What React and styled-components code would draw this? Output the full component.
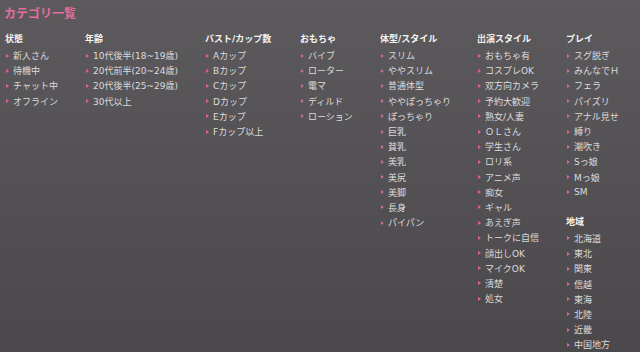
import styled, { createGlobalStyle } from 'styled-components';

const GlobalStyle = createGlobalStyle`
   html, body {
      margin: 0;
      padding: 0;
   }
   body {
      font-family: "DejaVu Sans", "Noto Sans CJK JP", sans-serif;
      background: #4b484c;
   }
`;

const categories = [
   {
      width: 80,
      groups: [
         { title: '状態', items: ['新人さん', '待機中', 'チャット中', 'オフライン'] },
      ],
   },
   {
      width: 120,
      groups: [
         {
            title: '年齢',
            items: ['10代後半(18~19歳)', '20代前半(20~24歳)', '20代後半(25~29歳)', '30代以上'],
         },
      ],
   },
   {
      width: 95,
      groups: [
         {
            title: 'バスト/カップ数',
            items: ['Aカップ', 'Bカップ', 'Cカップ', 'Dカップ', 'Eカップ', 'Fカップ以上'],
         },
      ],
   },
   {
      width: 80,
      groups: [
         { title: 'おもちゃ', items: ['バイブ', 'ローター', '電マ', 'ディルド', 'ローション'] },
      ],
   },
   {
      width: 97,
      groups: [
         {
            title: '体型/スタイル',
            items: [
               'スリム', 'ややスリム', '普通体型', 'ややぽっちゃり', 'ぽっちゃり', '巨乳',
               '貧乳', '美乳', '美尻', '美脚', '長身', 'パイパン',
            ],
         },
      ],
   },
   {
      width: 89,
      groups: [
         {
            title: '出演スタイル',
            items: [
               'おもちゃ有', 'コスプレOK', '双方向カメラ', '予約大歓迎', '熟女/人妻', 'ＯＬさん',
               '学生さん', 'ロリ系', 'アニメ声', '痴女', 'ギャル', 'あえぎ声', 'トークに自信',
               '顔出しOK', 'マイクOK', '清楚', '処女',
            ],
         },
      ],
   },
   {
      width: 70,
      groups: [
         {
            title: 'プレイ',
            items: [
               'スグ脱ぎ', 'みんなでＨ', 'フェラ', 'パイズリ', 'アナル見せ', '縛り', '潮吹き',
               'Sっ娘', 'Mっ娘', 'SM',
            ],
         },
         {
            title: '地域',
            items: ['北海道', '東北', '関東', '信越', '東海', '北陸', '近畿', '中国地方'],
         },
      ],
   },
];

const App = () => {
   return (
      <>
         <GlobalStyle />
         <Page>
            <Title>カテゴリ一覧</Title>
            <Columns>
               {categories.map((col, i) => (
                  <Column key={i} $width={col.width}>
                     {col.groups.map((group) => (
                        <Group key={group.title}>
                           <Heading>{group.title}</Heading>
                           <List>
                              {group.items.map((item) => (
                                 <Item key={item}>{item}</Item>
                              ))}
                           </List>
                        </Group>
                     ))}
                  </Column>
               ))}
            </Columns>
         </Page>
      </>
   );
};

export default App;

const Page = styled.main`
   min-height: 100vh;
   box-sizing: border-box;
   padding: 6px 0 0 4px;
   background: linear-gradient(to bottom, #5d5a5d 0%, #4b484c 100%);
`;

const Title = styled.h2`
   margin: 0;
   font-family: "Noto Sans CJK JP", sans-serif;
   font-size: 12px;
   line-height: 14px;
   font-weight: 700;
   color: #e46e9a;
`;

const Columns = styled.div`
   display: flex;
   align-items: flex-start;
   margin-top: 11px;
`;

const Column = styled.div`
   flex: 0 0 ${(p) => p.$width}px;
   display: flex;
   flex-direction: column;
   gap: 14px;
`;

const Group = styled.section`
   display: flex;
   flex-direction: column;
`;

const Heading = styled.h3`
   margin: 0 0 1px 1px;
   font-size: 9px;
   line-height: 16px;
   font-weight: 700;
   color: #f4f4f4;
`;

const List = styled.ul`
   list-style: none;
   margin: 0;
   padding: 0;
`;

const Item = styled.li`
   display: flex;
   align-items: center;
   height: 15.2px;
   padding-left: 2px;
   font-size: 9px;
   color: #dcdbdc;
   white-space: nowrap;

   &::before {
      content: '';
      flex: none;
      width: 0;
      height: 0;
      margin-right: 4px;
      border-left: 3px solid #e0609a;
      border-top: 2px solid transparent;
      border-bottom: 2px solid transparent;
   }
`;
